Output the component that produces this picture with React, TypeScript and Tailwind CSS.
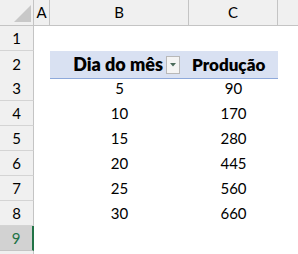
import React from "react";

const rows: { b?: string; c?: string; hdr?: boolean }[] = [
  {},
  { hdr: true },
  { b: "5", c: "90" },
  { b: "10", c: "170" },
  { b: "15", c: "280" },
  { b: "20", c: "445" },
  { b: "25", c: "560" },
  { b: "30", c: "660" },
  {},
  {},
];

export default function App() {
  return (
    <div
      className="w-[298px] h-[254px] bg-white overflow-hidden text-black"
      style={{ fontFamily: "Lato, 'Liberation Sans', sans-serif" }}
    >
      <div className="grid grid-cols-[34px_16px_139px_89px_1fr] h-[26px] bg-[#f0f0f0] text-[15px]">
        <div className="relative border-r border-b border-[#c4c4c4]">
          <svg className="absolute left-[14px] top-[5px]" width="18" height="18" viewBox="0 0 18 18">
            <polygon points="17,0 17,17 0,17" fill="#c8c8c8" />
          </svg>
        </div>
        <div className="border-r border-b border-[#c4c4c4] flex items-center justify-center">A</div>
        <div className="border-r border-b border-[#c4c4c4] flex items-center justify-center">B</div>
        <div className="border-r border-b border-[#c4c4c4] flex items-center justify-center">C</div>
        <div className="border-b border-[#c4c4c4]"></div>
      </div>
      {rows.map((r, i) => {
        const n = i + 1;
        const sel = n === 9;
        return (
          <div key={n} className="grid grid-cols-[34px_16px_139px_89px_1fr] h-[25px]">
            <div
              className={
                sel
                  ? "bg-[#d2d2d2] border-b border-[#c4c4c4] border-r-2 border-r-[#217346] text-[#217346] flex items-center justify-center text-[15px]"
                  : "bg-[#f0f0f0] border-b border-[#d4d4d4] border-r border-r-[#c4c4c4] flex items-center justify-center text-[15px]"
              }
            >
              {n < 10 ? n : ""}
            </div>
            <div></div>
            {r.hdr ? (
              <>
                <div className="bg-[#d9e1f2] border-b border-[#8ea9db] flex items-center justify-end pr-[9px] font-extrabold text-[18px]">
                  <span className="mr-[3px]">Dia do mês</span>
                  <span className="w-[14px] h-[18px] border border-[#b8b8b8] bg-[#f4f4f4] flex items-center justify-center">
                    <svg width="6" height="4" viewBox="0 0 6 4">
                      <polygon points="0,0 6,0 3,3.5" fill="#4a6a5a" />
                    </svg>
                  </span>
                </div>
                <div className="bg-[#d9e1f2] border-b border-[#8ea9db] flex items-center justify-start pl-[3px] font-extrabold text-[17px]">
                  Produção
                </div>
              </>
            ) : (
              <>
                <div className="flex items-center justify-center text-[15px]">{r.b}</div>
                <div className="flex items-center justify-center text-[15px]">{r.c}</div>
              </>
            )}
            <div></div>
          </div>
        );
      })}
    </div>
  );
}
